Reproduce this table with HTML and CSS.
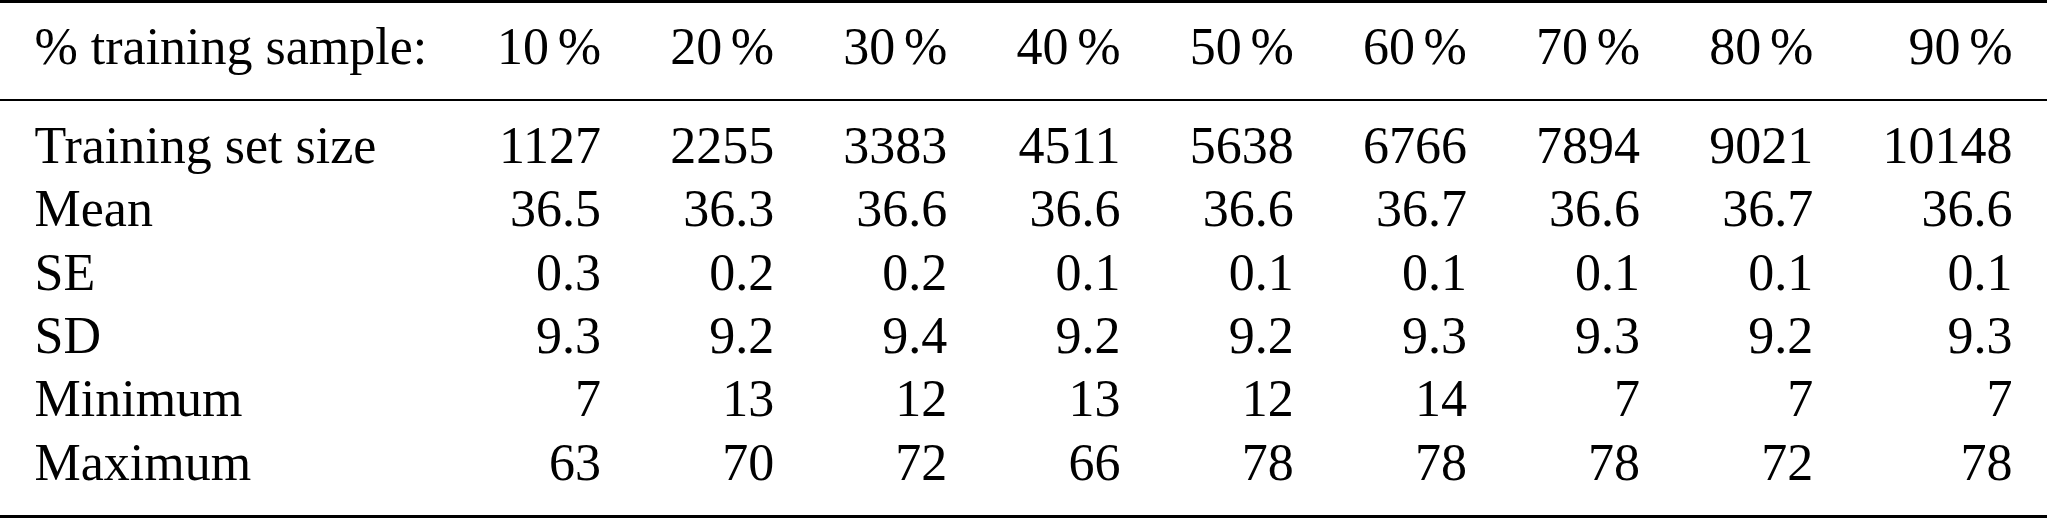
FILE: index.html
```html
<!DOCTYPE html>
<html>
<head>
<meta charset="utf-8">
<link rel="stylesheet" href="styles.css">
</head>
<body>
<table class="stats">
  <thead>
    <tr>
      <th class="label">% training sample:</th>
      <th>10<span class="thin"></span>%</th>
      <th>20<span class="thin"></span>%</th>
      <th>30<span class="thin"></span>%</th>
      <th>40<span class="thin"></span>%</th>
      <th>50<span class="thin"></span>%</th>
      <th>60<span class="thin"></span>%</th>
      <th>70<span class="thin"></span>%</th>
      <th>80<span class="thin"></span>%</th>
      <th>90<span class="thin"></span>%</th>
    </tr>
  </thead>
  <tbody>
    <tr class="first">
      <td class="label">Training set size</td>
      <td>1127</td><td>2255</td><td>3383</td><td>4511</td><td>5638</td><td>6766</td><td>7894</td><td>9021</td><td>10148</td>
    </tr>
    <tr>
      <td class="label">Mean</td>
      <td>36.5</td><td>36.3</td><td>36.6</td><td>36.6</td><td>36.6</td><td>36.7</td><td>36.6</td><td>36.7</td><td>36.6</td>
    </tr>
    <tr>
      <td class="label">SE</td>
      <td>0.3</td><td>0.2</td><td>0.2</td><td>0.1</td><td>0.1</td><td>0.1</td><td>0.1</td><td>0.1</td><td>0.1</td>
    </tr>
    <tr>
      <td class="label">SD</td>
      <td>9.3</td><td>9.2</td><td>9.4</td><td>9.2</td><td>9.2</td><td>9.3</td><td>9.3</td><td>9.2</td><td>9.3</td>
    </tr>
    <tr>
      <td class="label">Minimum</td>
      <td>7</td><td>13</td><td>12</td><td>13</td><td>12</td><td>14</td><td>7</td><td>7</td><td>7</td>
    </tr>
    <tr class="last">
      <td class="label">Maximum</td>
      <td>63</td><td>70</td><td>72</td><td>66</td><td>78</td><td>78</td><td>78</td><td>72</td><td>78</td>
    </tr>
  </tbody>
</table>
</body>
</html>
```

FILE: styles.css
```css
html, body {
  margin: 0;
  padding: 0;
  background: #ffffff;
}

.stats {
  width: 100%;
  border-collapse: separate;
  border-spacing: 0;
  font-family: "Liberation Serif", "Times New Roman", serif;
  font-size: 52px;
  line-height: 63.4px;
  color: #000000;
}

.stats th,
.stats td {
  padding: 0 34.5px;
  text-align: right;
  font-weight: normal;
  white-space: nowrap;
}

.stats .label {
  text-align: left;
}

.stats th {
  border-top: 3px solid #000000;
  border-bottom: 2px solid #000000;
  padding-top: 11.8px;
  padding-bottom: 20.8px;
}

.stats tr.first td {
  padding-top: 12.8px;
}

.stats tr.last td {
  padding-bottom: 20.8px;
  border-bottom: 3px solid #000000;
}

.thin {
  display: inline-block;
  width: 0.1667em;
}
```
